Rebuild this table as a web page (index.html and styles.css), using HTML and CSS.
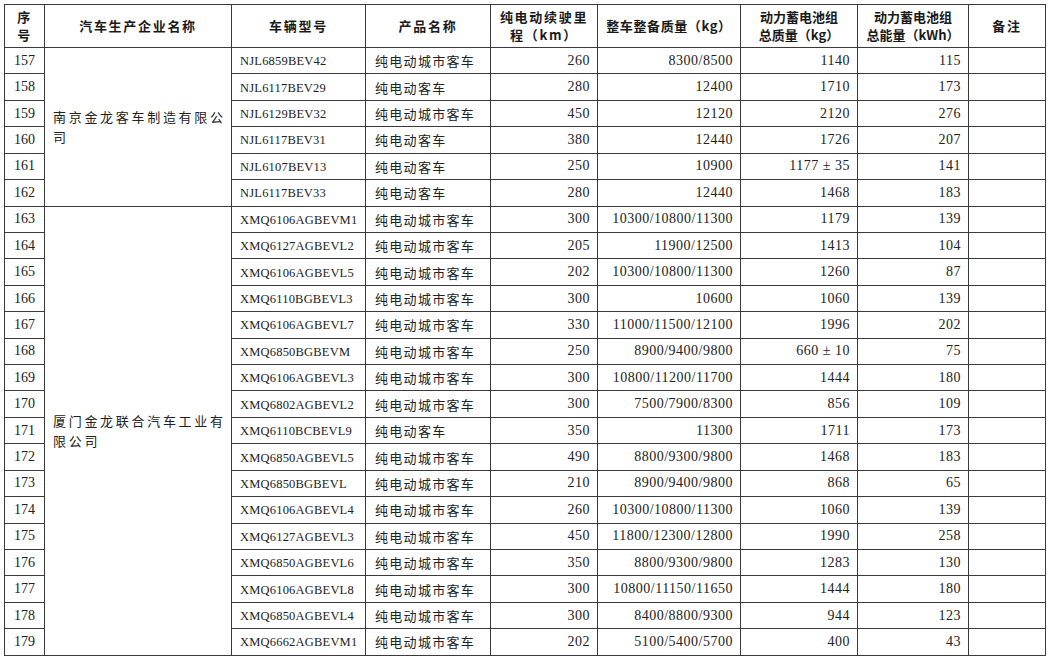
FILE: index.html
```html
<!DOCTYPE html>
<html lang="zh">
<head>
<meta charset="utf-8">
<title>车型目录</title>
<link rel="stylesheet" href="styles.css">
</head>
<body>
<table class="sheet">
<colgroup>
<col class="c-no"><col class="c-maker"><col class="c-model"><col class="c-prod"><col class="c-range"><col class="c-mass"><col class="c-bmass"><col class="c-benergy"><col class="c-note">
</colgroup>
<thead>
<tr class="head">
<th class="h-no">序<br>号</th>
<th>汽车生产企业名称</th>
<th>车辆型号</th>
<th>产品名称</th>
<th>纯电动续驶里<br>程（km）</th>
<th class="nowrap">整车整备质量（kg）</th>
<th class="tight">动力蓄电池组<br>总质量（kg）</th>
<th class="tight">动力蓄电池组<br>总能量（kWh）</th>
<th>备注</th>
</tr>
</thead>
<tbody>
<tr><td class="no">157</td><td class="maker" rowspan="6">南京金龙客车制造有限公司</td><td class="model">NJL6859BEV42</td><td class="prod">纯电动城市客车</td><td class="num">260</td><td class="num">8300/8500</td><td class="num">1140</td><td class="num">115</td><td></td></tr>
<tr><td class="no">158</td><td class="model">NJL6117BEV29</td><td class="prod">纯电动客车</td><td class="num">280</td><td class="num">12400</td><td class="num">1710</td><td class="num">173</td><td></td></tr>
<tr><td class="no">159</td><td class="model">NJL6129BEV32</td><td class="prod">纯电动城市客车</td><td class="num">450</td><td class="num">12120</td><td class="num">2120</td><td class="num">276</td><td></td></tr>
<tr><td class="no">160</td><td class="model">NJL6117BEV31</td><td class="prod">纯电动客车</td><td class="num">380</td><td class="num">12440</td><td class="num">1726</td><td class="num">207</td><td></td></tr>
<tr><td class="no">161</td><td class="model">NJL6107BEV13</td><td class="prod">纯电动客车</td><td class="num">250</td><td class="num">10900</td><td class="num">1177 ± 35</td><td class="num">141</td><td></td></tr>
<tr><td class="no">162</td><td class="model">NJL6117BEV33</td><td class="prod">纯电动客车</td><td class="num">280</td><td class="num">12440</td><td class="num">1468</td><td class="num">183</td><td></td></tr>
<tr><td class="no">163</td><td class="maker" rowspan="17">厦门金龙联合汽车工业有限公司</td><td class="model">XMQ6106AGBEVM1</td><td class="prod">纯电动城市客车</td><td class="num">300</td><td class="num">10300/10800/11300</td><td class="num">1179</td><td class="num">139</td><td></td></tr>
<tr><td class="no">164</td><td class="model">XMQ6127AGBEVL2</td><td class="prod">纯电动城市客车</td><td class="num">205</td><td class="num">11900/12500</td><td class="num">1413</td><td class="num">104</td><td></td></tr>
<tr><td class="no">165</td><td class="model">XMQ6106AGBEVL5</td><td class="prod">纯电动城市客车</td><td class="num">202</td><td class="num">10300/10800/11300</td><td class="num">1260</td><td class="num">87</td><td></td></tr>
<tr><td class="no">166</td><td class="model">XMQ6110BGBEVL3</td><td class="prod">纯电动城市客车</td><td class="num">300</td><td class="num">10600</td><td class="num">1060</td><td class="num">139</td><td></td></tr>
<tr><td class="no">167</td><td class="model">XMQ6106AGBEVL7</td><td class="prod">纯电动城市客车</td><td class="num">330</td><td class="num">11000/11500/12100</td><td class="num">1996</td><td class="num">202</td><td></td></tr>
<tr><td class="no">168</td><td class="model">XMQ6850BGBEVM</td><td class="prod">纯电动城市客车</td><td class="num">250</td><td class="num">8900/9400/9800</td><td class="num">660 ± 10</td><td class="num">75</td><td></td></tr>
<tr><td class="no">169</td><td class="model">XMQ6106AGBEVL3</td><td class="prod">纯电动城市客车</td><td class="num">300</td><td class="num">10800/11200/11700</td><td class="num">1444</td><td class="num">180</td><td></td></tr>
<tr><td class="no">170</td><td class="model">XMQ6802AGBEVL2</td><td class="prod">纯电动城市客车</td><td class="num">300</td><td class="num">7500/7900/8300</td><td class="num">856</td><td class="num">109</td><td></td></tr>
<tr><td class="no">171</td><td class="model">XMQ6110BCBEVL9</td><td class="prod">纯电动客车</td><td class="num">350</td><td class="num">11300</td><td class="num">1711</td><td class="num">173</td><td></td></tr>
<tr><td class="no">172</td><td class="model">XMQ6850AGBEVL5</td><td class="prod">纯电动城市客车</td><td class="num">490</td><td class="num">8800/9300/9800</td><td class="num">1468</td><td class="num">183</td><td></td></tr>
<tr><td class="no">173</td><td class="model">XMQ6850BGBEVL</td><td class="prod">纯电动城市客车</td><td class="num">210</td><td class="num">8900/9400/9800</td><td class="num">868</td><td class="num">65</td><td></td></tr>
<tr><td class="no">174</td><td class="model">XMQ6106AGBEVL4</td><td class="prod">纯电动城市客车</td><td class="num">260</td><td class="num">10300/10800/11300</td><td class="num">1060</td><td class="num">139</td><td></td></tr>
<tr><td class="no">175</td><td class="model">XMQ6127AGBEVL3</td><td class="prod">纯电动城市客车</td><td class="num">450</td><td class="num">11800/12300/12800</td><td class="num">1990</td><td class="num">258</td><td></td></tr>
<tr><td class="no">176</td><td class="model">XMQ6850AGBEVL6</td><td class="prod">纯电动城市客车</td><td class="num">350</td><td class="num">8800/9300/9800</td><td class="num">1283</td><td class="num">130</td><td></td></tr>
<tr><td class="no">177</td><td class="model">XMQ6106AGBEVL8</td><td class="prod">纯电动城市客车</td><td class="num">300</td><td class="num">10800/11150/11650</td><td class="num">1444</td><td class="num">180</td><td></td></tr>
<tr><td class="no">178</td><td class="model">XMQ6850AGBEVL4</td><td class="prod">纯电动城市客车</td><td class="num">300</td><td class="num">8400/8800/9300</td><td class="num">944</td><td class="num">123</td><td></td></tr>
<tr><td class="no">179</td><td class="model">XMQ6662AGBEVM1</td><td class="prod">纯电动城市客车</td><td class="num">202</td><td class="num">5100/5400/5700</td><td class="num">400</td><td class="num">43</td><td></td></tr>
</tbody>
</table>
</body>
</html>
```
FILE: styles.css
```css
html, body {
  margin: 0;
  padding: 0;
  background: #ffffff;
}
body {
  padding: 4px 0 0 4px;
  color: #222222;
  font-family: "Liberation Serif", "Noto Sans CJK SC", serif;
}
.sheet {
  border-collapse: collapse;
  table-layout: fixed;
  width: 1041px;
}
.c-no { width: 40px; }
.c-maker { width: 187px; }
.c-model { width: 134px; }
.c-prod { width: 125px; }
.c-range { width: 107px; }
.c-mass { width: 143px; }
.c-bmass { width: 117px; }
.c-benergy { width: 111px; }
.c-note { width: 77px; }

.sheet th, .sheet td {
  border: 1px solid #3a3a3a;
  padding: 0;
  overflow: hidden;
}
.head { height: 43px; }
.sheet tbody tr { height: 26.43px; }

.sheet th {
  font-family: "Noto Sans CJK SC", sans-serif;
  font-weight: 700;
  font-size: 13px;
  letter-spacing: 1.7px;
  line-height: 18px;
  text-align: center;
  vertical-align: middle;
  color: #1a1a1a;
  white-space: nowrap;
}
.sheet th.tight { letter-spacing: 0; }
.sheet th.nowrap { letter-spacing: 0.6px; }

.no {
  text-align: center;
  font-size: 14px;
}
.maker {
  font-family: "Noto Sans CJK SC", sans-serif;
  font-size: 13px;
  letter-spacing: 2.7px;
  line-height: 20px;
  padding: 0 4px 0 8px !important;
  vertical-align: middle;
  text-align: left;
  word-break: break-all;
}
.model {
  font-size: 12.5px;
  letter-spacing: 0.2px;
  padding: 2px 0 0 8px !important;
  white-space: nowrap;
}
.prod {
  font-family: "Noto Sans CJK SC", sans-serif;
  font-size: 13px;
  letter-spacing: 1.3px;
  padding-left: 9px !important;
  white-space: nowrap;
}
.num {
  text-align: right;
  font-size: 14px;
  letter-spacing: 0.5px;
  padding-right: 7px !important;
  white-space: nowrap;
}
```
